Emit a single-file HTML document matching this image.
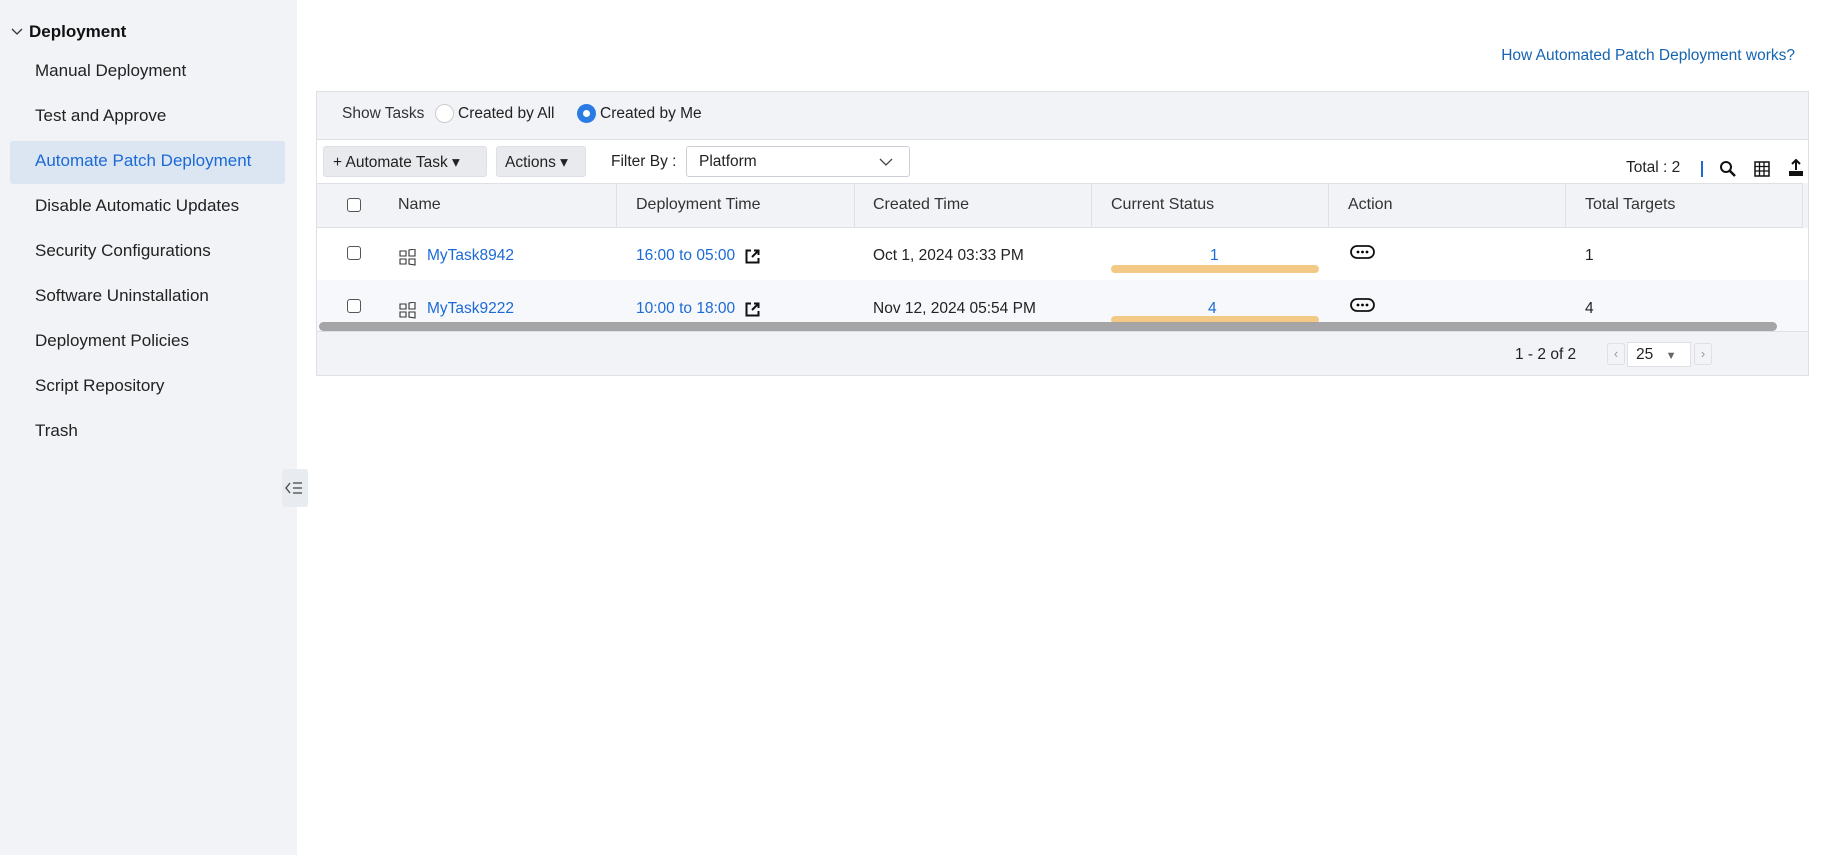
<!DOCTYPE html>
<html><head><meta charset="utf-8"><style>
*{box-sizing:border-box;margin:0;padding:0}
body{width:1822px;height:855px;background:#fff;font-family:"Liberation Sans",sans-serif;color:#222;position:relative;overflow:hidden}
.a{position:absolute;white-space:nowrap}
.side{position:absolute;left:0;top:0;width:297px;height:855px;background:#f1f3f7}
.item{position:absolute;left:35px;font-size:17px;color:#222}
.blue{color:#1b6ad6}
.hd{font-size:16px;color:#333}
.cell{font-size:15.5px}
.cb{position:absolute;width:14px;height:14px;border:1.5px solid #555;border-radius:3px;background:#fff}
.div{position:absolute;top:183px;width:1px;height:45px;background:#dde0e5}
</style></head><body>
<div class="side"></div>
<div class="a" style="left:10px;top:22px;font-size:17px;font-weight:bold;color:#111">
<svg width="14" height="10" style="margin-right:5px" viewBox="0 0 14 10"><path d="M2 2l5 5 5-5" fill="none" stroke="#333" stroke-width="1.3"/></svg>Deployment</div>
<div class="item a" style="top:61px">Manual Deployment</div>
<div class="item a" style="top:106px">Test and Approve</div>
<div class="a" style="left:10px;top:141px;width:275px;height:43px;background:#dbe6f2;border-radius:3px"></div>
<div class="item a blue" style="top:151px">Automate Patch Deployment</div>
<div class="item a" style="top:196px">Disable Automatic Updates</div>
<div class="item a" style="top:241px">Security Configurations</div>
<div class="item a" style="top:286px">Software Uninstallation</div>
<div class="item a" style="top:331px">Deployment Policies</div>
<div class="item a" style="top:376px">Script Repository</div>
<div class="item a" style="top:421px">Trash</div>
<div class="a" style="left:282px;top:469px;width:26px;height:38px;background:#e8ebf0;border-radius:3px">
<svg width="26" height="38" viewBox="0 0 26 38"><path d="M8 14l-4 5 4 5" fill="none" stroke="#444" stroke-width="1.3"/><path d="M11 14h9M11 19h9M11 24h9" stroke="#444" stroke-width="1.3"/></svg></div>

<div class="a blue" style="right:27px;top:47px;font-size:15.5px;color:#1664b0">How Automated Patch Deployment works?</div>

<div class="a" style="left:316px;top:91px;width:1493px;height:285px;border:1px solid #dde0e5;background:#f1f3f7"></div>
<div class="a" style="left:317px;top:139px;width:1491px;height:44px;background:#fff;border-top:1px solid #dde0e5"></div>
<div class="a" style="left:342px;top:105px;font-size:15.5px;color:#333">Show Tasks</div>
<div class="a" style="left:435px;top:104px;width:19px;height:19px;border:1px solid #ccc;border-radius:50%;background:#fff"></div>
<div class="a" style="left:458px;top:105px;font-size:15.5px">Created by All</div>
<div class="a" style="left:577px;top:104px;width:19px;height:19px;border-radius:50%;background:#2b7be5"><div style="margin:6px;width:7px;height:7px;border-radius:50%;background:#fff"></div></div>
<div class="a" style="left:600px;top:105px;font-size:15.5px">Created by Me</div>

<div class="a" style="left:323px;top:146px;width:164px;height:31px;background:#e8eaee;border:1px solid #dde0e5;border-radius:3px;font-size:15.5px;padding:6px 0 0 9px">+ Automate Task &#9662;</div>
<div class="a" style="left:496px;top:146px;width:90px;height:31px;background:#e8eaee;border:1px solid #dde0e5;border-radius:3px;font-size:15.5px;padding:6px 0 0 8px">Actions &#9662;</div>
<div class="a" style="left:611px;top:153px;font-size:15.5px">Filter By :</div>
<div class="a" style="left:686px;top:146px;width:224px;height:31px;border:1px solid #ccd0d6;border-radius:3px;background:#fff;font-size:15.5px;padding:6px 0 0 12px">Platform
<svg style="position:absolute;right:16px;top:11px" width="14" height="9" viewBox="0 0 14 9"><path d="M1 1l6 6 6-6" fill="none" stroke="#444" stroke-width="1.3"/></svg></div>
<div class="a" style="left:1626px;top:159px;font-size:15.5px">Total : 2</div>
<div class="a" style="left:1701px;top:161px;width:2px;height:16px;background:#1b6ad6"></div>
<svg class="a" style="left:1719px;top:160px" width="18" height="18" viewBox="0 0 18 18"><circle cx="7" cy="7" r="5" fill="none" stroke="#111" stroke-width="2"/><path d="M11 11l5 5" stroke="#111" stroke-width="2.5"/></svg>
<svg class="a" style="left:1754px;top:161px" width="16" height="16" viewBox="0 0 16 16"><rect x="1" y="1" width="14" height="14" fill="none" stroke="#111" stroke-width="1.5"/><path d="M1 5.5h14M1 10h14M5.5 1v14M10 1v14" stroke="#111" stroke-width="1.3"/></svg>
<svg class="a" style="left:1788px;top:159px" width="16" height="18" viewBox="0 0 16 18"><path d="M8 1v10M4 5l4-4 4 4" fill="none" stroke="#111" stroke-width="2"/><path d="M1 12v5h14v-5" fill="#111"/><rect x="1" y="13" width="14" height="4" fill="#111"/></svg>

<div class="a" style="left:317px;top:183px;width:1485px;height:45px;background:#f1f3f7;border-top:1px solid #dde0e5;border-bottom:1px solid #dde0e5"></div>
<div class="div" style="left:616px"></div><div class="div" style="left:854px"></div><div class="div" style="left:1091px"></div><div class="div" style="left:1328px"></div><div class="div" style="left:1565px"></div><div class="div" style="left:1802px"></div>
<div class="cb" style="left:347px;top:198px"></div>
<div class="a hd" style="left:398px;top:196px">Name</div>
<div class="a hd" style="left:636px;top:196px">Deployment Time</div>
<div class="a hd" style="left:873px;top:196px">Created Time</div>
<div class="a hd" style="left:1111px;top:196px">Current Status</div>
<div class="a hd" style="left:1348px;top:196px">Action</div>
<div class="a hd" style="left:1585px;top:196px">Total Targets</div>

<div class="a" style="left:317px;top:228px;width:1491px;height:52px;background:#fff"></div>
<div class="a" style="left:317px;top:280px;width:1491px;height:51px;background:#f7f8fb"></div>

<div class="cb" style="left:347px;top:246px"></div>
<svg class="a" style="left:399px;top:249px" width="17" height="17" viewBox="0 0 17 17"><path d="M1 2h6v5H1zM10 1l6-1v7h-6zM1 10h6v5H1zM10 10h6v6l-6-1z" fill="none" stroke="#333" stroke-width="1.1"/></svg>
<div class="a cell blue" style="left:427px;top:247px">MyTask8942</div>
<div class="a cell blue" style="left:636px;top:247px">16:00 to 05:00</div>
<svg class="a" style="left:745px;top:249px" width="15" height="15" viewBox="0 0 15 15"><path d="M6 1.5H1.5v12h12V9" fill="none" stroke="#111" stroke-width="2"/><path d="M7 8l6-6M9 1.5h4.5V6" fill="none" stroke="#111" stroke-width="2"/></svg>
<div class="a cell" style="left:873px;top:247px">Oct 1, 2024 03:33 PM</div>
<div class="a cell blue" style="left:1210px;top:247px">1</div>
<div class="a" style="left:1111px;top:265px;width:208px;height:8px;border-radius:4px;background:#f2ca85"></div>
<svg class="a" style="left:1350px;top:245px" width="25" height="15" viewBox="0 0 25 15"><rect x="1" y="1" width="23" height="12" rx="6" fill="none" stroke="#111" stroke-width="1.8"/><circle cx="8" cy="7" r="1.4"/><circle cx="12.5" cy="7" r="1.4"/><circle cx="17" cy="7" r="1.4"/></svg>
<div class="a cell" style="left:1585px;top:247px">1</div>

<div class="cb" style="left:347px;top:299px"></div>
<svg class="a" style="left:399px;top:302px" width="17" height="17" viewBox="0 0 17 17"><path d="M1 2h6v5H1zM10 1l6-1v7h-6zM1 10h6v5H1zM10 10h6v6l-6-1z" fill="none" stroke="#333" stroke-width="1.1"/></svg>
<div class="a cell blue" style="left:427px;top:300px">MyTask9222</div>
<div class="a cell blue" style="left:636px;top:300px">10:00 to 18:00</div>
<svg class="a" style="left:745px;top:302px" width="15" height="15" viewBox="0 0 15 15"><path d="M6 1.5H1.5v12h12V9" fill="none" stroke="#111" stroke-width="2"/><path d="M7 8l6-6M9 1.5h4.5V6" fill="none" stroke="#111" stroke-width="2"/></svg>
<div class="a cell" style="left:873px;top:300px">Nov 12, 2024 05:54 PM</div>
<div class="a cell blue" style="left:1208px;top:300px">4</div>
<div class="a" style="left:1111px;top:316px;width:208px;height:8px;border-radius:4px;background:#f2ca85"></div>
<svg class="a" style="left:1350px;top:298px" width="25" height="15" viewBox="0 0 25 15"><rect x="1" y="1" width="23" height="12" rx="6" fill="none" stroke="#111" stroke-width="1.8"/><circle cx="8" cy="7" r="1.4"/><circle cx="12.5" cy="7" r="1.4"/><circle cx="17" cy="7" r="1.4"/></svg>
<div class="a cell" style="left:1585px;top:300px">4</div>

<div class="a" style="left:319px;top:322px;width:1458px;height:9px;border-radius:5px;background:#a0a0a2;opacity:.95"></div>
<div class="a" style="left:317px;top:331px;width:1491px;height:1px;background:#dde0e5"></div>

<div class="a" style="left:1515px;top:346px;font-size:15.5px">1 - 2 of 2</div>
<div class="a" style="left:1607px;top:343px;width:18px;height:22px;border:1px solid #dde0e5;border-radius:3px;color:#999;font-size:13px;text-align:center;line-height:20px">&#8249;</div>
<div class="a" style="left:1627px;top:342px;width:64px;height:25px;border:1px solid #dde0e5;background:#fff;font-size:15.5px;padding:3px 0 0 8px">25 <span style="font-size:11px;color:#666;margin-left:8px">&#9660;</span></div>
<div class="a" style="left:1694px;top:343px;width:18px;height:22px;border:1px solid #dde0e5;border-radius:3px;color:#999;font-size:13px;text-align:center;line-height:20px">&#8250;</div>
</body></html>
